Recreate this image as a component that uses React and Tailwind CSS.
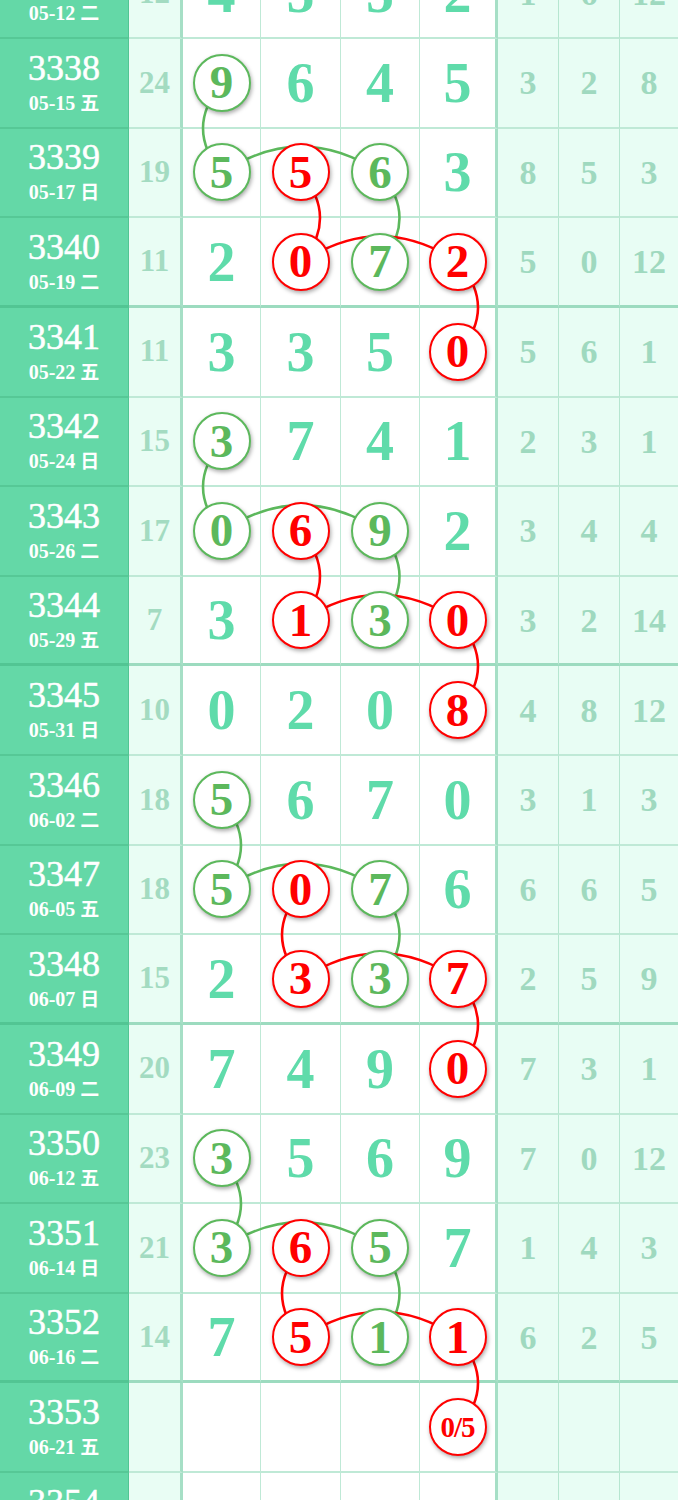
const ROW_H = 89.625;

const rows = [
  ["3337", "05-12 二", "12", ["4", "5", "5", "2"], ["1", "6", "12"]],
  ["3338", "05-15 五", "24", ["9g", "6", "4", "5"], ["3", "2", "8"]],
  ["3339", "05-17 日", "19", ["5g", "5r", "6g", "3"], ["8", "5", "3"]],
  ["3340", "05-19 二", "11", ["2", "0r", "7g", "2r"], ["5", "0", "12"]],
  ["3341", "05-22 五", "11", ["3", "3", "5", "0r"], ["5", "6", "1"]],
  ["3342", "05-24 日", "15", ["3g", "7", "4", "1"], ["2", "3", "1"]],
  ["3343", "05-26 二", "17", ["0g", "6r", "9g", "2"], ["3", "4", "4"]],
  ["3344", "05-29 五", "7", ["3", "1r", "3g", "0r"], ["3", "2", "14"]],
  ["3345", "05-31 日", "10", ["0", "2", "0", "8r"], ["4", "8", "12"]],
  ["3346", "06-02 二", "18", ["5g", "6", "7", "0"], ["3", "1", "3"]],
  ["3347", "06-05 五", "18", ["5g", "0r", "7g", "6"], ["6", "6", "5"]],
  ["3348", "06-07 日", "15", ["2", "3r", "3g", "7r"], ["2", "5", "9"]],
  ["3349", "06-09 二", "20", ["7", "4", "9", "0r"], ["7", "3", "1"]],
  ["3350", "06-12 五", "23", ["3g", "5", "6", "9"], ["7", "0", "12"]],
  ["3351", "06-14 日", "21", ["3g", "6r", "5g", "7"], ["1", "4", "3"]],
  ["3352", "06-16 二", "14", ["7", "5r", "1g", "1r"], ["6", "2", "5"]],
  ["3353", "06-21 五", "", ["", "", "", "0/5r"], ["", "", ""]],
  ["3354", "06-23 日", "", ["", "", "", ""], ["", "", ""]],
];

const mainW = ["w-[78px]", "w-[80px]", "w-[79px]", "w-[78px]"];
const colX = [222, 301, 380.5, 459];
const rightW = ["w-[61px]", "w-[61px]", "w-[58px]"];

// [rowA, colA, rowB, colB, color, bend]
const G = "#5cb85c";
const R = "#ff0000";
const links = [];
[
  [1, -1],
  [5, -1],
  [9, 1],
  [13, 1],
].forEach(([s, gb]) => {
  links.push([s, 0, s + 1, 0, G, 38 * gb]);
  links.push([s + 1, 0, s + 1, 2, G, -53]);
  links.push([s + 1, 2, s + 2, 2, G, 38]);
  links.push([s + 1, 1, s + 2, 1, R, s >= 9 ? -38 : 38]);
  links.push([s + 2, 1, s + 2, 3, R, -53]);
  links.push([s + 2, 3, s + 3, 3, R, 38]);
});

const cy = (r) => r * ROW_H + ROW_H / 2;

function Links() {
  return (
    <svg className="absolute left-0 top-0 z-[1] pointer-events-none" width="678" height={rows.length * ROW_H}>
      {links.map(([ra, ca, rb, cb, color, bend], i) => {
        const x1 = colX[ca], y1 = cy(ra), x2 = colX[cb], y2 = cy(rb);
        const qx = ra === rb ? (x1 + x2) / 2 : x1 + bend;
        const qy = ra === rb ? y1 + bend : (y1 + y2) / 2;
        return <path key={i} d={`M${x1} ${y1} Q${qx} ${qy} ${x2} ${y2}`} fill="none" stroke={color} strokeWidth="2.5" />;
      })}
    </svg>
  );
}

function Ball({ v }) {
  const red = v.endsWith("r");
  const text = v.slice(0, -1);
  return (
    <div
      className={`relative z-[2] w-[58px] h-[58px] rounded-full bg-white border-[2.5px] flex items-center justify-center shadow-[1px_2px_4px_rgba(0,0,0,0.35)] font-bold ${
        red ? "border-[#ff0000] text-[#ff0000]" : "border-[#5cb85c] text-[#5cb85c]"
      } ${text.length > 1 ? "text-[29px] tracking-[-1px]" : "text-[47px]"}`}
    >
      <span className="leading-none">{text}</span>
    </div>
  );
}

export default function App() {
  return (
    <div className="w-[678px] h-[1500px] overflow-hidden bg-white font-['Liberation_Serif','Noto_Sans_CJK_SC',serif]">
      <div className="relative mt-[-50.625px]">
        <Links />
        {rows.map(([no, date, sum, main, right], i) => {
          const thick = i % 4 === 3;
          const bb = thick ? "border-b-[3px] border-b-[#9cdbbf]" : "border-b-2 border-b-[#bfe9d6]";
          return (
            <div key={no} className="flex h-[89.625px]">
              <div
                className={`w-[129px] shrink-0 bg-[#64d8a7] border-r border-r-[#52c593] flex flex-col items-center justify-center text-white ${
                  thick ? "border-b-[3px] border-b-[#52c593]" : "border-b-2 border-b-[#56c896]"
                }`}
              >
                <div className="text-[36px] leading-[34px] [-webkit-text-stroke:0.5px_white]">{no}</div>
                <div className="text-[20px] leading-[24px] font-bold mt-[5px]">
                  {date.split(" ")[0]}{" "}
                  <span className="font-['Noto_Sans_CJK_SC',sans-serif] text-[19px]">{date.split(" ")[1]}</span>
                </div>
              </div>
              <div className={`w-[54px] shrink-0 bg-[#e9fdf4] border-r-[3px] border-r-[#a6dfc6] flex items-center justify-center text-[31px] font-bold text-[#a3dbc1] ${bb}`}>
                {sum}
              </div>
              {main.map((v, j) => (
                <div
                  key={j}
                  className={`${mainW[j]} shrink-0 bg-white flex items-center justify-center ${
                    j === 3 ? "border-r-[3px] border-r-[#a6dfc6]" : "border-r border-r-[#bfe9d6]"
                  } ${bb}`}
                >
                  {v.endsWith("g") || v.endsWith("r") ? (
                    <Ball v={v} />
                  ) : (
                    <span className="text-[56px] leading-none font-bold text-[#5fdbaa]">{v}</span>
                  )}
                </div>
              ))}
              {right.map((v, j) => (
                <div
                  key={j}
                  className={`${rightW[j]} shrink-0 bg-[#e8fdf4] flex items-center justify-center text-[34px] font-bold text-[#9fd9bf] ${
                    j < 2 ? "border-r border-r-[#b6e6d0]" : ""
                  } ${bb}`}
                >
                  {v}
                </div>
              ))}
            </div>
          );
        })}
      </div>
    </div>
  );
}
